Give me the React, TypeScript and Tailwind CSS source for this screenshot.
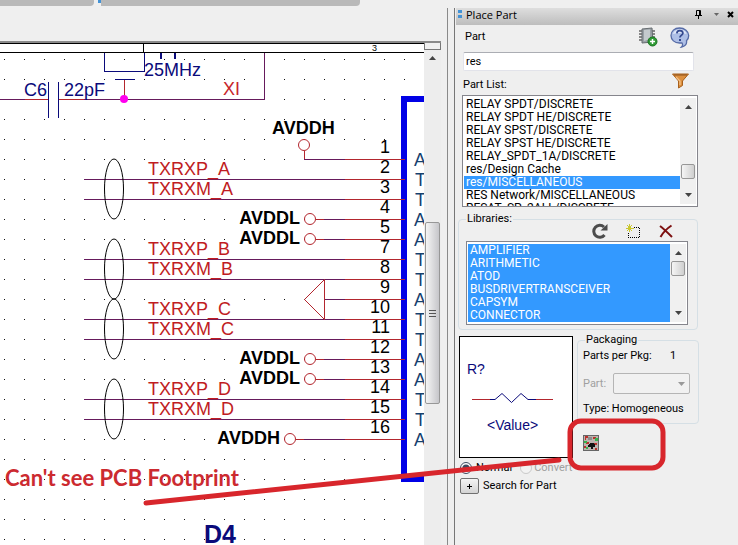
import React, { useState } from "react";

const INK = "#0a0a7a";
const PIN = "#b3262e";
const WIRE = "#661a5c";

const parts = [
  "RELAY SPDT/DISCRETE",
  "RELAY SPDT HE/DISCRETE",
  "RELAY SPST/DISCRETE",
  "RELAY SPST HE/DISCRETE",
  "RELAY_SPDT_1A/DISCRETE",
  "res/Design Cache",
  "res/MISCELLANEOUS",
  "RES Network/MISCELLANEOUS",
  "RESAT_SP_2ALL/DISCRETE",
];

const libraries = ["AMPLIFIER", "ARITHMETIC", "ATOD", "BUSDRIVERTRANSCEIVER", "CAPSYM", "CONNECTOR"];

// wireFrom is where the net starts, left of the pin stub
const pins = [
  { num: "1", name: "A", y: 159, wireFrom: 304 },
  { num: "2", name: "T", y: 179, wireFrom: 84 },
  { num: "3", name: "T", y: 199, wireFrom: 84 },
  { num: "4", name: "A", y: 219, wireFrom: 323 },
  { num: "5", name: "A", y: 239, wireFrom: 323 },
  { num: "7", name: "T", y: 259, wireFrom: 84 },
  { num: "8", name: "T", y: 279, wireFrom: 84 },
  { num: "9", name: "A", y: 299, wireFrom: 325 },
  { num: "10", name: "T", y: 319, wireFrom: 84 },
  { num: "11", name: "T", y: 339, wireFrom: 84 },
  { num: "12", name: "A", y: 359, wireFrom: 323 },
  { num: "13", name: "A", y: 379, wireFrom: 323 },
  { num: "14", name: "T", y: 399, wireFrom: 84 },
  { num: "15", name: "T", y: 419, wireFrom: 84 },
  { num: "16", name: "A", y: 439, wireFrom: 303 },
];

const pairs = [
  { id: "A", y: 179 },
  { id: "B", y: 259 },
  { id: "C", y: 319 },
  { id: "D", y: 399 },
];

const rails = [
  { label: "AVDDL", x: 310, y: 219 },
  { label: "AVDDL", x: 310, y: 239 },
  { label: "AVDDL", x: 310, y: 359 },
  { label: "AVDDL", x: 310, y: 379 },
  { label: "AVDDH", x: 290, y: 439 },
];

function Schematic() {
  return (
    <svg className="block h-full w-full font-['Liberation_Sans',sans-serif]" fontSize="18">
      <defs>
        <pattern id="grid" x="4" y="59" width="20" height="20" patternUnits="userSpaceOnUse">
          <rect width="1" height="1" fill="#111" />
        </pattern>
      </defs>
      <g transform="translate(0 -43)">
        <rect x="0" y="53" width="100%" height="100%" fill="url(#grid)" />
        <g shapeRendering="crispEdges">
          <rect x="0" y="43" width="100%" height="1" fill="#000" />
          <rect x="0" y="52" width="100%" height="1" fill="#000" />
          <rect x="143" y="43" width="1" height="10" fill="#000" />
        </g>
        <text x="372" y="51" fontSize="9">3</text>

        {/* Crystal and load capacitor */}
        <g fill="none" stroke={INK} shapeRendering="crispEdges">
          <path d="M104.500 53V71.500H144.500V53" />
          <path d="M161 53V59M175 53V59" strokeWidth="2" />
          <path d="M115 79.500H135M48.500 82V118M58.500 82V118" />
          <path d="M0 99.500H48M59 99.500H264.500V53" stroke={WIRE} />
          <path d="M25 99.500H48M59 99.500H84M124.500 80V99" stroke={PIN} />
        </g>
        <circle cx="124" cy="99" r="4" fill="#f0e" />
        <g fill={INK}>
          <text x="24" y="96">C6</text>
          <text x="64" y="96">22pF</text>
          <text x="144" y="76">25MHz</text>
        </g>
        <text x="223" y="95" fill="#c8262b">XI</text>

        {/* Device outline */}
        <path d="M440 99H404V479H440" fill="none" stroke="#0000e6" strokeWidth="6" />
        {pins.map((p) => (
          <g key={p.num}>
            <g shapeRendering="crispEdges">
              <rect x={p.wireFrom} y={p.y} width={345 - p.wireFrom} height="1" fill={WIRE} />
              <rect x="345" y={p.y} width="60" height="1" fill={PIN} />
            </g>
            <text x="390" y={p.y - 6} textAnchor="end">{p.num}</text>
            <text x={p.name === "A" ? 414 : 415} y={p.y + 7} fill="#15406e">{p.name}</text>
          </g>
        ))}

        {pairs.map((p) => (
          <g key={p.id}>
            <ellipse cx="114" cy={p.y + 10} rx="9.500" ry="30" fill="none" stroke="#000" />
            <text x="148" y={p.y - 4} fill="#c01c22">{`TXRXP_${p.id}`}</text>
            <text x="148" y={p.y + 16} fill="#c01c22">{`TXRXM_${p.id}`}</text>
          </g>
        ))}

        {rails.map((r) => (
          <g key={r.y}>
            <circle cx={r.x} cy={r.y} r="5.500" fill="#fff" stroke={PIN} />
            <rect x={r.x + 6} y={r.y} width="8" height="1" fill={PIN} />
            <text x={r.x - 10} y={r.y + 5} textAnchor="end" fontWeight="700">{r.label}</text>
          </g>
        ))}
        <circle cx="304" cy="145" r="5.500" fill="#fff" stroke={PIN} />
        <path d="M304.500 151V159" stroke={PIN} />
        <text x="272" y="134" fontWeight="700">AVDDH</text>
        <path d="M324.500 279.500V319.500L304.500 299.500Z" fill="#fff" stroke={PIN} />
        <text x="204" y="543" fontSize="25" fontWeight="700" fill={INK}>D4</text>
      </g>
    </svg>
  );
}

function Arrow({ down = false }: { down?: boolean }) {
  return (
    <svg width="7" height="4" className={down ? "rotate-180" : ""}>
      <path d="M0 4L3.500 0L7 4Z" fill="#444" />
    </svg>
  );
}

function ListScroll({ children }: { children: React.ReactNode }) {
  return (
    <div className="flex w-4 shrink-0 flex-col items-center bg-[#f0f0f0] py-[7px]">
      <Arrow />
      {children}
      <Arrow down />
    </div>
  );
}

const thumb = "h-[15px] w-[14px] shrink-0 rounded-xs border border-[#979797] bg-linear-to-r from-[#f5f5f5] to-[#cfcfcf]";

function ChipIcon() {
  return (
    <svg width="20" height="20" viewBox="0 0 20 20">
      <path d="M1 4H17M1 7H17M1 10H17M1 13H17" stroke="#666" strokeWidth="1.500" />
      <path d="M4 2L14 1L15 15L4 16Z" fill="#9aa1a6" stroke="#666c70" />
      <path d="M6 3L12 2.500V12L6 14Z" fill="#c4cacd" />
      <circle cx="14.500" cy="14.500" r="4.500" fill="#2f9a35" stroke="#19731f" />
      <path d="M14.500 12V17M12 14.500H17" stroke="#fff" strokeWidth="1.500" />
    </svg>
  );
}

function HelpIcon() {
  return (
    <svg width="20" height="21" viewBox="0 0 20 21">
      <path d="M9.500 1C4.500 1 1 4.200 1 8.500S4.500 16 9.500 16H12C13 17.500 12.500 19 11.500 20C15.500 19 17 16.500 16.500 13.800C18 12.500 18.700 10.700 18.700 8.500C18.700 4.200 14.500 1 9.500 1Z" fill="#aebfe6" stroke="#566ba6" strokeWidth="1.300" />
      <path d="M3 7C4 3.500 7 2.500 10 2.500S16 4 16.500 7C12 5.500 7 5.500 3 7Z" fill="#dfe7f8" />
      <path d="M6.800 6.300C7 4.400 8.300 3.700 9.800 3.700C11.600 3.700 12.900 4.700 12.900 6.300C12.900 8.300 9.900 8.300 9.900 10.600" fill="none" stroke="#34498f" strokeWidth="1.700" />
      <rect x="9" y="12" width="2" height="2" fill="#34498f" />
    </svg>
  );
}

function FilterIcon() {
  return (
    <svg width="17" height="16" viewBox="0 0 17 16">
      <path d="M0.500 1H16.500L10.500 8V12.500L6.500 15V8Z" fill="#dc8f3e" stroke="#a8601c" />
      <path d="M2 2H15" stroke="#8d531d" />
      <path d="M4 4L8 8V12" fill="none" stroke="#f4c084" strokeWidth="1.300" />
    </svg>
  );
}

function FootprintIcon() {
  return (
    <svg width="16" height="16" viewBox="0 0 16 16" shapeRendering="crispEdges">
      <rect width="16" height="16" fill="#666" />
      <rect x="1" y="1" width="14" height="14" fill="#bcb3ae" />
      <path d="M2 1H5V3H3V5H2ZM10 2H13V4H10ZM3 7H6V9H3ZM11 8H14V10H11ZM1 11H3V13H1ZM12 13H14V15H12Z" fill="#b9302b" />
      <path d="M1 6H4V8H1ZM12 3H15V6H12ZM3 12H5V14H3Z" fill="#35b34b" />
      <path d="M5 2H9V5H5Z" fill="#8b8b8b" />
      <path d="M5 10L7 8H10L12 10V12H10V14H8V12H5Z" fill="#111" />
    </svg>
  );
}

function PlacePartPanel() {
  const [query, setQuery] = useState("res");
  const [selected, setSelected] = useState("res/MISCELLANEOUS");

  return (
    <aside className="flex w-[284px] shrink-0 flex-col border-l border-[#777] bg-[#efefef] pl-px text-[11px] leading-3 text-black">
      <header className="flex h-[17px] items-center bg-linear-to-b from-[#dedede] to-[#bdbdbd] pr-1 pb-1 pl-0.5">
        <svg width="4" height="9" className="mr-1">
          <path d="M0 0H4V3H0ZM0 5H4V8H0Z" fill="#4292d6" />
        </svg>
        <h1 className="flex-1 font-['Open_Sans',sans-serif] text-[11px] leading-3">Place Part</h1>
        <button aria-label="Pin" className="mr-3">
          <svg width="7" height="9" fill="none" stroke="#000" className="block">
            <path d="M1.500 5V0.500H5.500V5M4.500 1V5M0 5.500H7M3.500 6V9" />
          </svg>
        </button>
        <button aria-label="Options" className="mr-2">
          <svg width="5" height="3" className="block">
            <path d="M0 0H5L2.500 3Z" fill="#666" />
          </svg>
        </button>
        <button aria-label="Close">
          <svg width="7" height="7" className="block" stroke="#000" strokeWidth="2">
            <path d="M1 1L6 6M6 1L1 6" />
          </svg>
        </button>
      </header>

      <div className="flex h-6 items-center pr-12 pl-[9px]">
        <label htmlFor="part" className="flex-1">Part</label>
        <button aria-label="Place part" className="mr-3"><ChipIcon /></button>
        <button aria-label="Help"><HelpIcon /></button>
      </div>
      <input
        id="part"
        value={query}
        onChange={(e) => setQuery(e.target.value)}
        className="mt-[3px] mr-11 ml-[7px] h-[19px] rounded-xs border border-[#e2e3ea] border-t-[#abadb3] bg-white px-0.5 text-[11px] outline-none"
      />
      <div className="flex h-6 items-end justify-between pr-[49px] pb-1 pl-[7px]">
        <span id="part-list">Part List:</span>
        <button aria-label="Filter" className="self-start pt-0.5"><FilterIcon /></button>
      </div>
      <div className="mr-10 ml-1.5 flex h-[112px] overflow-hidden border border-[#85858c] bg-white px-px py-0.5">
        <ul role="listbox" aria-labelledby="part-list" className="min-w-0 flex-1 text-[12px] leading-[13px]">
          {parts.map((p) => (
            <li
              key={p}
              role="option"
              aria-selected={p === selected}
              onClick={() => setSelected(p)}
              className={`whitespace-nowrap pl-0.5 ${p === selected ? "bg-[#3399ff] text-white" : ""}`}
            >
              {p}
            </li>
          ))}
        </ul>
        <ListScroll>
          <div className="flex-1" />
          <div className={`mb-3.5 ${thumb}`} />
        </ListScroll>
      </div>

      <fieldset className="mt-1.5 mr-10 ml-0.5 rounded-sm border border-[#d5dfe5] px-[7px] pb-1">
        <legend id="libraries" className="px-px">Libraries:</legend>
        <div className="mb-[5px] flex h-[11px] items-center justify-end gap-[17px] pr-4">
          <button aria-label="Refresh">
            <svg width="16" height="16" viewBox="0 0 16 16" fill="none">
              <path d="M12.500 12A6 6 0 1 1 12 4" stroke="#4c4c4c" strokeWidth="3" />
              <path d="M15.500 1V7.500H8.500Z" fill="#4c4c4c" />
            </svg>
          </button>
          <button aria-label="Add library">
            <svg width="16" height="16" viewBox="0 0 16 16" fill="none" shapeRendering="crispEdges">
              <path d="M9 4.500H14.500V14.500H3.500V9" stroke="#000" strokeDasharray="1 1" />
              <path d="M4.500 1V4M4.500 6V9M1 5.500H4M6 5.500H9M2 2L7 8M7 2L2 8" stroke="#c9c72f" />
            </svg>
          </button>
          <button aria-label="Remove library">
            <svg width="16" height="16" viewBox="0 0 16 16" fill="none">
              <path d="M2 3C6 6 10 10 14 14M13.500 2.500C9 5.500 5 9.500 2.500 14" stroke="#7d1010" strokeWidth="2" />
            </svg>
          </button>
        </div>
        <div className="mr-0.5 flex overflow-hidden border border-[#85858c] bg-white px-px py-0.5">
          <ul role="listbox" aria-labelledby="libraries" className="min-w-0 flex-1 bg-[#3399ff] text-[12px] leading-[13px] text-white">
            {libraries.map((l) => (
              <li key={l} role="option" aria-selected="true" className="pl-0.5">{l}</li>
            ))}
          </ul>
          <ListScroll>
            <div className={`mt-1.5 ${thumb}`} />
            <div className="flex-1" />
          </ListScroll>
        </div>
      </fieldset>

      <div className="mt-1 mr-[39px] ml-[3px] flex items-start gap-1">
        <svg width="114" height="122" className="mt-0.5 shrink-0 border border-black bg-white font-['Liberation_Sans',sans-serif]" fontSize="14" fill={INK}>
          <text x="7" y="37">R?</text>
          <path d="M12 62.500H30M76 62.500H93" stroke={PIN} />
          <path d="M30 62.500H35L42 56.500L51.500 65.500L61 56.500L68 62.500H76" fill="none" stroke={INK} />
          <text x="27" y="93">&lt;Value&gt;</text>
        </svg>
        <div className="flex-1">
          <fieldset className="rounded-sm border border-[#d5dfe5] pb-2 pl-[5px]">
            <legend className="ml-0.5 px-px">Packaging</legend>
            <div className="mt-1 flex">
              <span className="w-[87px]">Parts per Pkg:</span>
              <span>1</span>
            </div>
            <div className="mt-[11px] flex items-center pr-2">
              <label htmlFor="pkg-part" className="w-[30px] text-[#a0a0a0]">Part:</label>
              <div className="relative flex-1">
                <select id="pkg-part" disabled className="block h-[21px] w-full appearance-none rounded-xs border border-[#b5b5b5] bg-[#f1f1f1]" />
                <svg width="7" height="4" className="pointer-events-none absolute top-[9px] right-[5px]">
                  <path d="M0 0H7L3.500 4Z" fill="#999" />
                </svg>
              </div>
            </div>
            <p className="mt-[9px]">Type: Homogeneous</p>
          </fieldset>
          <button aria-label="Show footprint" className="mt-[11px] ml-1.5 block"><FootprintIcon /></button>
        </div>
      </div>

      <div className="mt-0.5 ml-1 flex h-4 items-center">
        <input id="normal" type="radio" name="view" defaultChecked className="h-3 w-3 accent-[#3a4a60]" />
        <label htmlFor="normal" className="ml-1">Normal</label>
        <input id="convert" type="radio" name="view" disabled className="ml-2 h-3 w-3" />
        <label htmlFor="convert" className="ml-0.5 text-[#a0a0a0]">Convert</label>
      </div>
      <div className="mt-0.5 ml-1 flex items-center gap-1">
        <button id="search" aria-label="Expand search" className="flex h-4 w-[19px] items-center justify-center rounded-xs border border-[#707070] bg-linear-to-b from-[#f4f4f4] to-[#d4d4d4]">
          <svg width="5" height="5" className="block"><path d="M0 2.500H5M2.500 0V5" stroke="#000" /></svg>
        </button>
        <label htmlFor="search">Search for Part</label>
      </div>
    </aside>
  );
}

export default function App() {
  return (
    <div className="relative flex h-screen flex-col overflow-hidden bg-[#efefef] font-[Roboto,sans-serif]">
      <div className="flex h-2 shrink-0 items-start">
        <div className="h-1.5 w-[94px] rounded-br-sm bg-[#b9b9b9]" />
        <div className="ml-1 h-[3px] w-[3px] bg-[#4292d6]" />
        <div className="h-1.5 w-[259px] rounded-br-sm bg-[#b9b9b9]" />
      </div>

      <div className="flex min-h-0 flex-1">
        <main className="mt-[33px] flex min-w-0 flex-1 flex-col border-t-2 border-[#8a8a8a]">
          <div className="flex min-h-0 flex-1">
            <div className="min-w-0 flex-1 overflow-hidden bg-white">
              <Schematic />
            </div>
            <div className="flex w-[17px] flex-col items-center bg-[#ededed]">
              <div className="h-[7px] w-full shrink-0 border border-t-0 border-[#777] bg-[#f0f0f0]" />
              <div className="mt-1.5 mb-[162px]"><Arrow /></div>
              <div className="flex h-[182px] w-[15px] shrink-0 flex-col items-center justify-center gap-0.5 rounded-xs border border-[#979797] bg-linear-to-r from-[#f5f5f5] to-[#c6c6ca]">
                <div className="h-px w-[7px] bg-[#555]" />
                <div className="h-px w-[7px] bg-[#555]" />
                <div className="h-px w-[7px] bg-[#555]" />
              </div>
            </div>
          </div>
        </main>
        <div className="w-[13px] shrink-0 pl-1.5">
          <div className="h-full w-px bg-[#8a8a8a]" />
        </div>
        <PlacePartPanel />
      </div>

      {/* Red markup drawn over the window */}
      <svg className="pointer-events-none absolute inset-0 h-full w-full" fill="none" stroke="#d8262c">
        <path d="M146 503L559 460" strokeWidth="5" strokeLinecap="round" />
        <rect x="570" y="421" width="93" height="47" rx="11" strokeWidth="5" />
        <text x="5" y="486" fontSize="22" fontWeight="700" fill="#cc2a30" stroke="none" className="font-[Lato,sans-serif]">
          Can't see PCB Footprint
        </text>
      </svg>
    </div>
  );
}
